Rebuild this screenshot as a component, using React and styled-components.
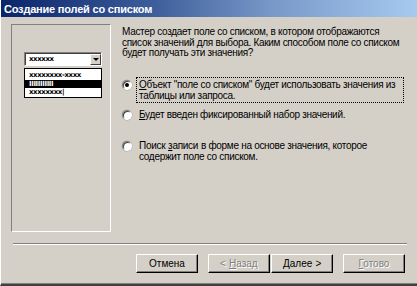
import React from 'react';
import styled, { createGlobalStyle, css } from 'styled-components';

const GlobalStyle = createGlobalStyle`
  html, body {
    margin: 0;
    padding: 0;
    background: #d4d0c8;
  }
  body {
    font-family: "Liberation Sans", Arial, sans-serif;
    font-size: 10px;
    color: #000;
  }
`;

const Window = styled.div`
  width: 417px;
  height: 286px;
  box-sizing: border-box;
  display: flex;
  flex-direction: column;
  background: #d4d0c8;
  border-left: 1px solid #ffffff;
  border-bottom: 2px solid #404040;
  box-shadow: inset 0 -1px 0 #808080;
  overflow: hidden;
`;

const TitleBar = styled.div`
  height: 17px;
  flex: none;
  margin-left: -1px;
  display: flex;
  align-items: center;
  padding-left: 4px;
  background: linear-gradient(to right, #0a246a 0%, #3a5a98 35%, #7898c8 65%, #a6caf0 100%);
  color: #ffffff;
  font-weight: bold;
  font-size: 11px;
  letter-spacing: -0.2px;
`;

const Body = styled.div`
  display: flex;
  padding: 7px 0 0 10px;
  height: 208px;
  flex: none;
`;

const ImagePanel = styled.div`
  width: 100px;
  height: 208px;
  box-sizing: border-box;
  border-top: 1px solid #808080;
  border-left: 1px solid #808080;
  border-right: 1px solid #ffffff;
  border-bottom: 1px solid #ffffff;
  padding: 27px 0 0 12px;
  flex: none;
`;

const Combo = styled.div`
  width: 78px;
  height: 14px;
  box-sizing: border-box;
  background: #ffffff;
  border-top: 1px solid #808080;
  border-left: 1px solid #808080;
  border-right: 1px solid #ffffff;
  border-bottom: 1px solid #ffffff;
  box-shadow: inset 1px 1px 0 #404040;
  display: flex;
  align-items: center;
  justify-content: space-between;
  padding-left: 4px;
`;

const DropButton = styled.div`
  width: 11px;
  height: 11px;
  box-sizing: border-box;
  background: #d4d0c8;
  border-top: 1px solid #ffffff;
  border-left: 1px solid #ffffff;
  border-right: 1px solid #404040;
  border-bottom: 1px solid #404040;
  display: flex;
  align-items: center;
  justify-content: center;
`;

const Arrow = styled.div`
  width: 0;
  height: 0;
  border-left: 3px solid transparent;
  border-right: 3px solid transparent;
  border-top: 3px solid #000;
`;

const Placeholder = styled.span`
  font-family: "DejaVu Sans", sans-serif;
  font-size: 7px;
  font-weight: bold;
  line-height: 8px;
  letter-spacing: -0.4px;
  color: ${({ $inverse }) => ($inverse ? '#ffffff' : '#000000')};
`;

const List = styled.div`
  margin-top: 2px;
  width: 78px;
  box-sizing: border-box;
  background: #ffffff;
  border: 1px solid #000000;
  display: flex;
  flex-direction: column;
  padding: 2px 0 1px;
`;

const ListItem = styled.div`
  height: 8px;
  padding-left: 4px;
  display: flex;
  align-items: center;
  ${({ $selected }) =>
    $selected &&
    css`
      background: #000000;
    `}
  margin-top: ${({ $top }) => $top || 0}px;
`;

const Content = styled.div`
  flex: 1;
  padding-left: 11px;
  display: flex;
  flex-direction: column;
  letter-spacing: -0.3px;
`;

const Description = styled.p`
  margin: 3px 0 0;
  line-height: 10.5px;
  width: 280px;
`;

const Options = styled.div`
  display: flex;
  flex-direction: column;
`;

const Option = styled.label`
  display: flex;
  align-items: flex-start;
  gap: 4px;
  margin-top: ${({ $top }) => $top}px;
`;

const Radio = styled.span`
  flex: none;
  width: 10px;
  height: 10px;
  margin-top: 3px;
  box-sizing: border-box;
  border-radius: 50%;
  background: #ffffff;
  border-top: 1px solid #808080;
  border-left: 1px solid #808080;
  border-right: 1px solid #ffffff;
  border-bottom: 1px solid #ffffff;
  box-shadow: inset 1px 1px 0 #404040, 0 0 0 0.5px #b0aca4;
  display: flex;
  align-items: center;
  justify-content: center;

  &::after {
    content: '';
    width: 4px;
    height: 4px;
    border-radius: 50%;
    background: ${({ $checked }) => ($checked ? '#000' : 'transparent')};
  }
`;

const OptionText = styled.span`
  display: block;
  width: 262px;
  padding: 1px 2px;
  line-height: 11px;
  border: 1px dotted ${({ $focused }) => ($focused ? '#000' : 'transparent')};

  ${({ $accelFirst }) =>
    $accelFirst &&
    css`
      &::first-letter {
        text-decoration: underline;
      }
    `}
`;

/* word whose first letter is the keyboard accelerator */
const AccelWord = styled.span`
  display: inline-block;
  margin: 0 0.4px;

  &::first-letter {
    text-decoration: underline;
  }
`;

const Separator = styled.div`
  margin: 11px 10px 0 12px;
  height: 1px;
  background: #808080;
  border-bottom: 1px solid #ffffff;
  flex: none;
`;

const ButtonRow = styled.div`
  display: flex;
  justify-content: flex-end;
  padding: 9px 12px 0 0;
`;

const Button = styled.button`
  width: 62px;
  height: 19px;
  box-sizing: border-box;
  margin-left: ${({ $gap }) => $gap}px;
  padding: 0;
  background: #d4d0c8;
  font-family: "Liberation Sans", Arial, sans-serif;
  font-size: 10px;
  border-top: 1px solid #ffffff;
  border-left: 1px solid #ffffff;
  border-right: 1px solid #000000;
  border-bottom: 1px solid #000000;
  box-shadow: inset -1px -1px 0 #808080;
  color: ${({ disabled }) => (disabled ? '#808080' : '#000000')};
  text-shadow: ${({ disabled }) => (disabled ? '1px 1px 0 #ffffff' : 'none')};
`;

export default function App() {
  return (
    <>
      <GlobalStyle />
      <Window>
        <TitleBar>Создание полей со списком</TitleBar>
        <Body>
          <ImagePanel>
            <Combo>
              <Placeholder>xxxxxx</Placeholder>
              <DropButton>
                <Arrow />
              </DropButton>
            </Combo>
            <List>
              <ListItem>
                <Placeholder>xxxxxxxx-xxxx</Placeholder>
              </ListItem>
              <ListItem $selected $top={1}>
                <Placeholder $inverse>IIIIIIIIIII</Placeholder>
              </ListItem>
              <ListItem>
                <Placeholder>xxxxxxxx|</Placeholder>
              </ListItem>
            </List>
          </ImagePanel>
          <Content>
            <Description>
              Мастер создает поле со списком, в котором отображаются список
              значений для выбора. Каким способом поле со списком будет
              получать эти значения?
            </Description>
            <Options>
              <Option $top={18}>
                <Radio $checked />
                <OptionText $focused $accelFirst>
                  Объект "поле со списком" будет использовать значения из
                  таблицы или запроса.
                </OptionText>
              </Option>
              <Option $top={4}>
                <Radio />
                <OptionText $accelFirst>
                  Будет введен фиксированный набор значений.
                </OptionText>
              </Option>
              <Option $top={16}>
                <Radio />
                <OptionText>
                  Поиск <AccelWord>записи</AccelWord> в форме на основе
                  значения, которое содержит поле со списком.
                </OptionText>
              </Option>
            </Options>
          </Content>
        </Body>
        <Separator />
        <ButtonRow>
          <Button $gap={0}>Отмена</Button>
          <Button $gap={10} disabled>
            &lt; <AccelWord>Назад</AccelWord>
          </Button>
          <Button $gap={1}>
            <AccelWord>Далее</AccelWord> &gt;
          </Button>
          <Button $gap={10} disabled>
            <AccelWord>Готово</AccelWord>
          </Button>
        </ButtonRow>
      </Window>
    </>
  );
}
